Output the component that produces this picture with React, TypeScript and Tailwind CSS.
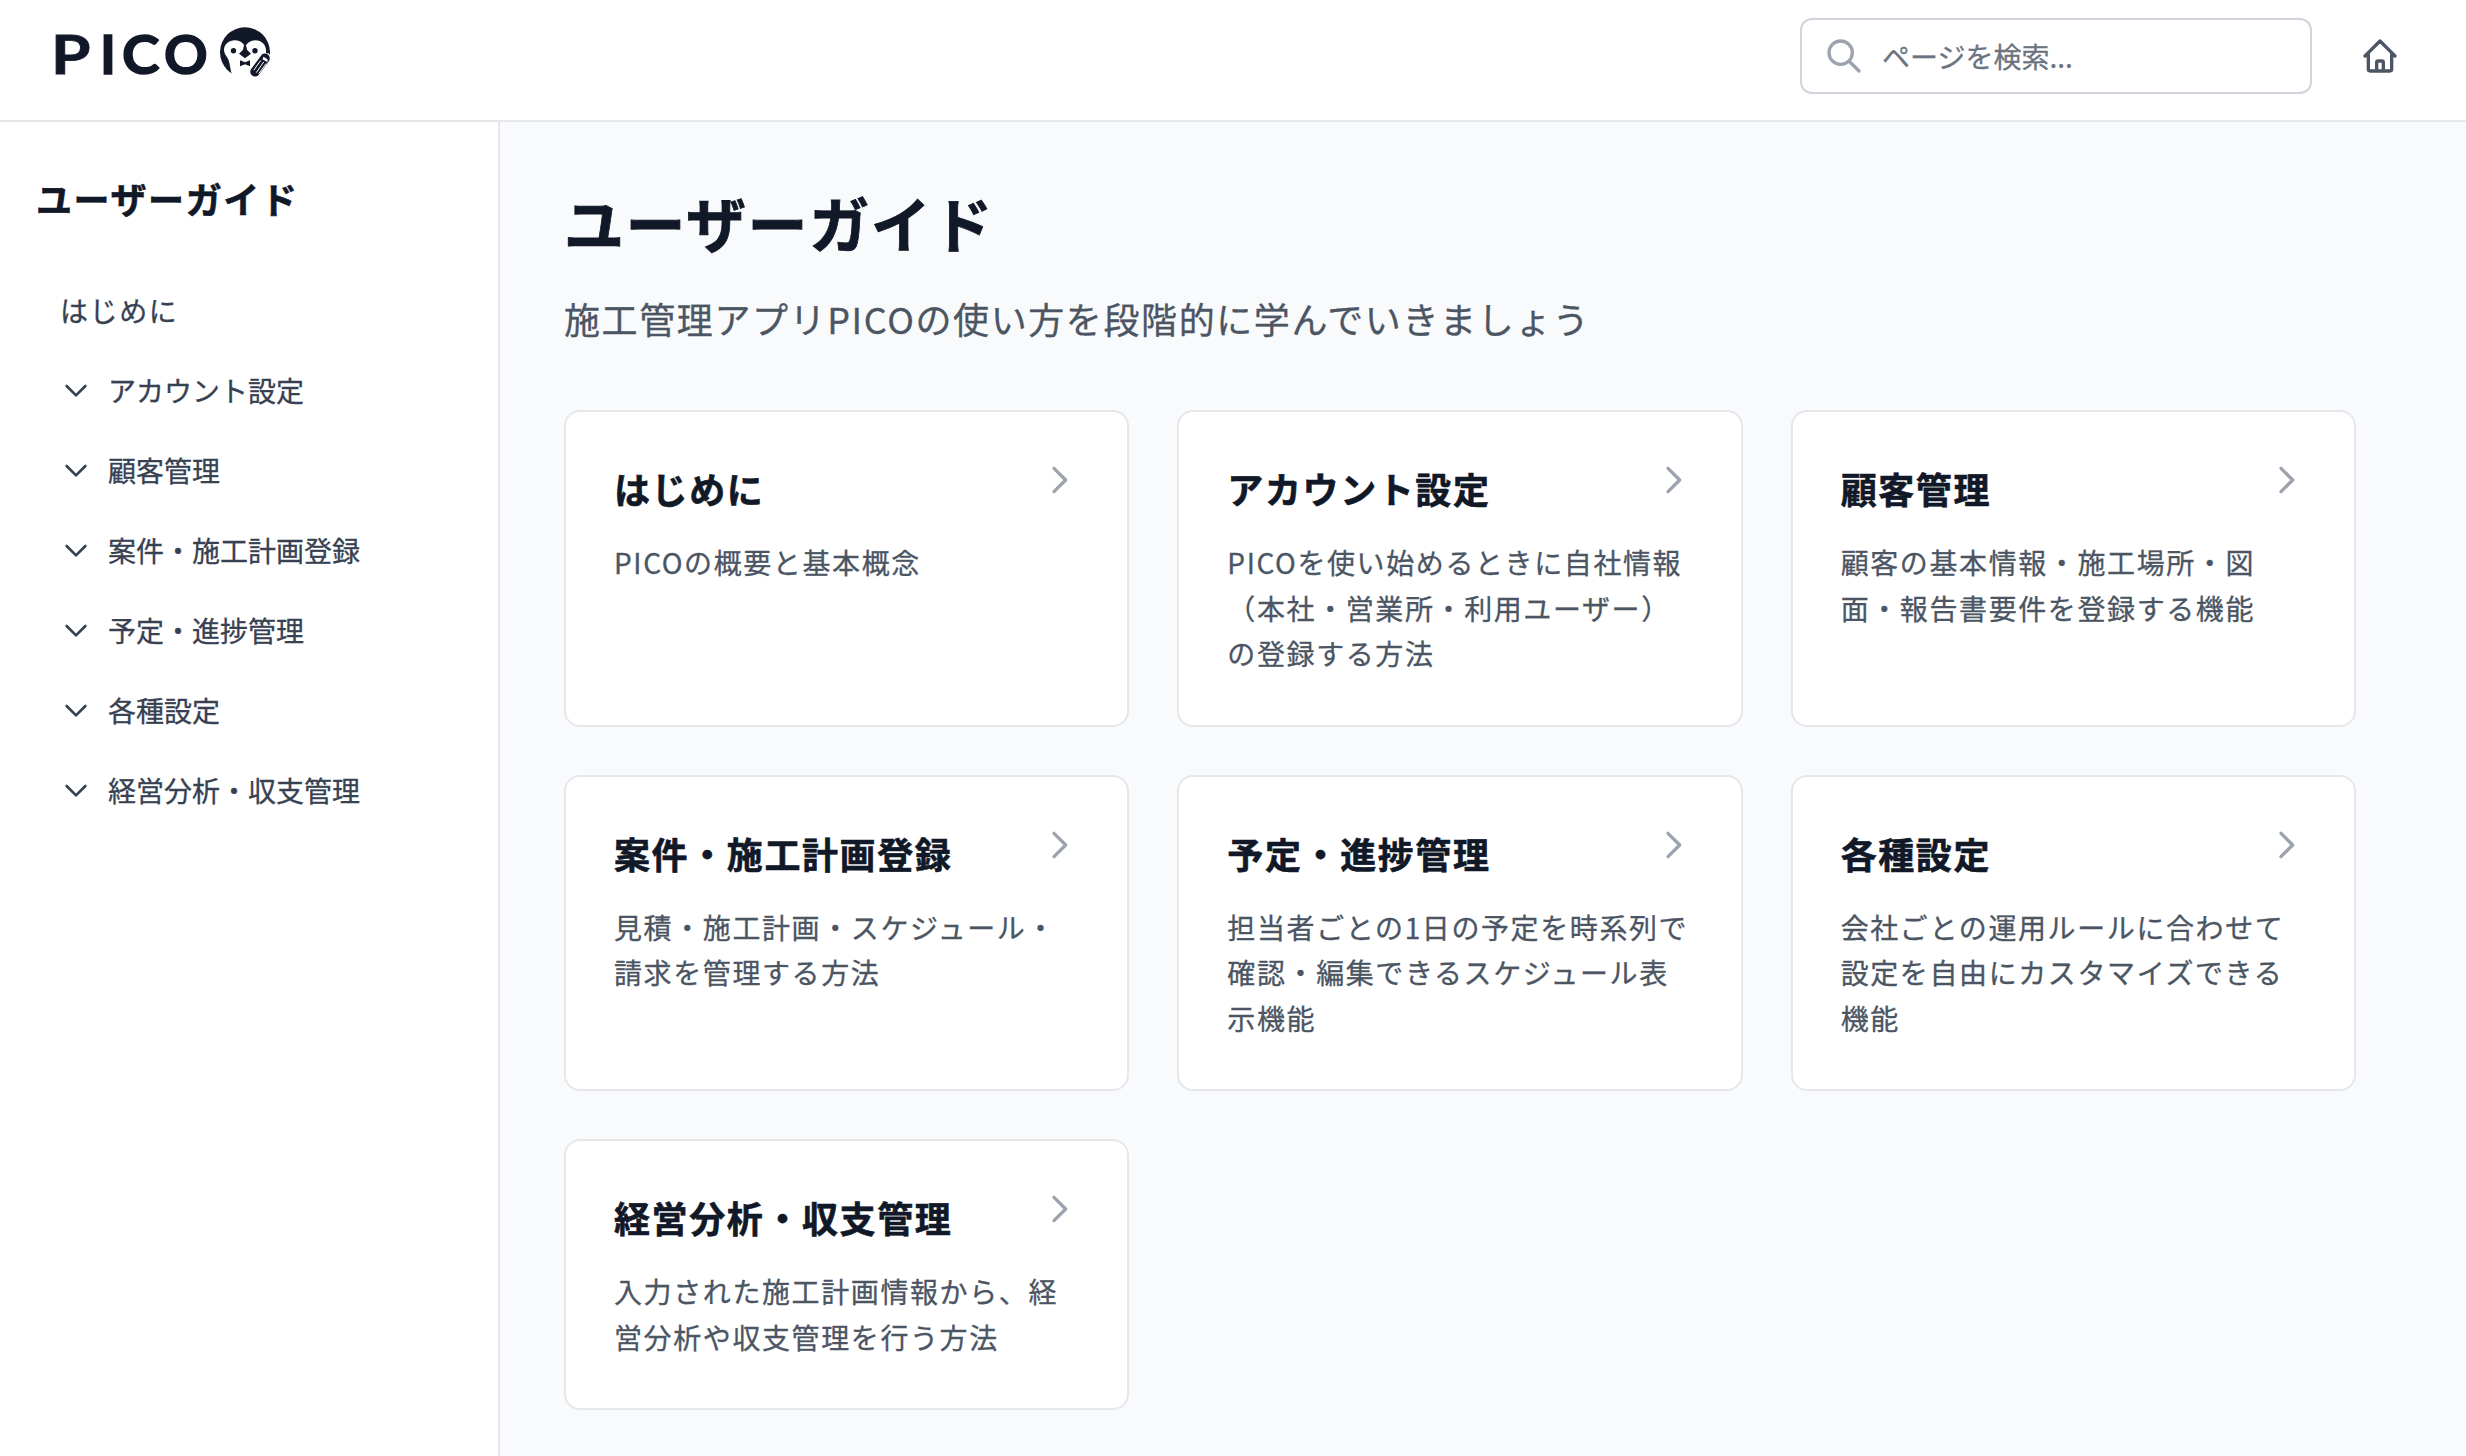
const navItems = [
  "アカウント設定",
  "顧客管理",
  "案件・施工計画登録",
  "予定・進捗管理",
  "各種設定",
  "経営分析・収支管理",
];

const cards = [
  { title: "はじめに", description: "PICOの概要と基本概念" },
  {
    title: "アカウント設定",
    description: "PICOを使い始めるときに自社情報（本社・営業所・利用ユーザー）の登録する方法",
  },
  {
    title: "顧客管理",
    description: "顧客の基本情報・施工場所・図面・報告書要件を登録する機能",
  },
  {
    title: "案件・施工計画登録",
    description: "見積・施工計画・スケジュール・請求を管理する方法",
  },
  {
    title: "予定・進捗管理",
    description: "担当者ごとの1日の予定を時系列で確認・編集できるスケジュール表示機能",
  },
  {
    title: "各種設定",
    description: "会社ごとの運用ルールに合わせて設定を自由にカスタマイズできる機能",
  },
  {
    title: "経営分析・収支管理",
    description: "入力された施工計画情報から、経営分析や収支管理を行う方法",
  },
];

function Logo() {
  return (
    <svg width="244" height="72" viewBox="-4 0 244 72" className="text-[#111827]" fill="currentColor">
      <g
        fontSize="54"
        stroke="currentColor"
        strokeWidth="0.8"
        className="font-['Lato',sans-serif] font-bold tracking-normal"
      >
        <text x="-1" y="55.500" textLength="39.500" lengthAdjust="spacingAndGlyphs">P</text>
        <text x="48" y="55.500" strokeWidth="1.500">I</text>
        <text x="70" y="55.500" textLength="37.500" lengthAdjust="spacingAndGlyphs" strokeWidth="1.500">C</text>
        <text x="112" y="55.500" strokeWidth="1.500">O</text>
      </g>
      {/* penguin */}
      <g transform="translate(168 9.300)">
        <circle cx="25" cy="25" r="25" />
        <path
          fill="#fff"
          d="M25 20C24 16 20 13 15 13 9 13 4 17 4 22.500c0 5 4.500 7.500 5.500 13.500 .8 5 1.500 9 3 13v3h27l12-22-3-4-2.500 0c1-8-4-13-10.500-13-5 0-9 3-10.500 7z"
        />
        <circle cx="13.500" cy="23.500" r="2.700" />
        <circle cx="35" cy="23.500" r="2.700" />
        <path d="M24 18h2l1 4.500 4 4-6 4.500-6-4.500 4-4z" />
        <path d="M20 33l5 2 5-2v6l-5-2-5 2z" />
        {/* pencil */}
        <g strokeLinecap="round" fill="none">
          <path d="M45 31L35 44.500" stroke="currentColor" strokeWidth="9.500" />
          <path d="M43.500 29.500l4 2.500v3l-5-3z" fill="#fff" />
          <path d="M40.500 33.500l-6.500 9M43.500 35l-7 10M46 36.500l-7 9.500" stroke="#fff" strokeWidth="1" />
        </g>
      </g>
    </svg>
  );
}

function ChevronDown() {
  return (
    <svg className="size-8 shrink-0" viewBox="0 0 24 24" fill="none" stroke="currentColor" strokeWidth="2" strokeLinecap="round" strokeLinejoin="round">
      <path d="M19 9l-7 7-7-7" />
    </svg>
  );
}

function GuideCard({ title, description }: { title: string; description: string }) {
  return (
    <a href="#" className="rounded-2xl border-2 border-[#e5e7eb] bg-white p-12">
      <div className="mb-6 flex items-start justify-between">
        <h3 className="text-4xl leading-14 font-bold [-webkit-text-stroke:0.6px]">{title}</h3>
        <svg className="size-10 shrink-0 text-[#9ca3af]" viewBox="0 0 24 24" fill="none" stroke="currentColor" strokeWidth="2" strokeLinecap="round" strokeLinejoin="round">
          <path d="M9 5l7 7-7 7" />
        </svg>
      </div>
      <p className="text-[28px] leading-[45.5px] text-[#4b5563]">{description}</p>
    </a>
  );
}

export default function App() {
  return (
    <div
      lang="ja"
      className="flex h-[1456px] flex-col overflow-hidden bg-[#f9fafb] font-['Noto_Sans_CJK_JP',sans-serif] tracking-[1.6px] text-[#111827] [-webkit-text-stroke:0.3px]"
    >
      <header className="flex h-[122px] shrink-0 items-start justify-between border-b-2 border-[#e5e7eb] bg-white pt-[18px] pr-[66px] pl-12">
        <Logo />
        <div className="flex items-center gap-12">
          <label className="flex h-[76px] w-[512px] items-center gap-[18px] rounded-xl border-2 border-[#d1d5db] pl-[22px]">
            <svg className="size-10 shrink-0 text-[#9ca3af]" viewBox="0 0 24 24" fill="none" stroke="currentColor" strokeWidth="2" strokeLinecap="round" strokeLinejoin="round">
              <path d="M21 21l-6-6m2-5a7 7 0 11-14 0 7 7 0 0114 0z" />
            </svg>
            <input
              type="text"
              placeholder="ページを検索..."
              className="w-full text-[28px] leading-10 tracking-normal outline-none placeholder:text-[#6b7280]"
            />
          </label>
          <svg className="size-10 text-[#4b5563]" viewBox="0 0 24 24" fill="none" stroke="currentColor" strokeWidth="2" strokeLinecap="round" strokeLinejoin="round">
            <path d="M3 12l2-2m0 0l7-7 7 7M5 10v10a1 1 0 001 1h3m10-11l2 2m-2-2v10a1 1 0 01-1 1h-3m-6 0a1 1 0 001-1v-4a1 1 0 011-1h2a1 1 0 011 1v4a1 1 0 001 1m-6 0h6" />
          </svg>
        </div>
      </header>

      <div className="flex min-h-0 flex-1">
        <aside className="w-[500px] shrink-0 border-r-2 border-[#e5e7eb] bg-white px-9 pt-12">
          <h2 className="mb-12 text-4xl leading-14 font-bold [-webkit-text-stroke:0.6px]">ユーザーガイド</h2>
          <nav className="flex flex-col gap-2 text-[28px] leading-10 text-[#374151]">
            <a href="#" className="px-6 py-4">
              はじめに
            </a>
            {navItems.map((item) => (
              <button key={item} className="flex items-center gap-4 px-6 py-4 tracking-normal">
                <ChevronDown />
                <span>{item}</span>
              </button>
            ))}
          </nav>
        </aside>

        <main className="flex-1 px-16 pt-16">
          <h1 className="mb-8 text-6xl leading-[72px] font-bold [-webkit-text-stroke:0.8px]">ユーザーガイド</h1>
          <p className="mb-16 text-4xl leading-14 text-[#4b5563]">
            施工管理アプリPICOの使い方を段階的に学んでいきましょう
          </p>
          <div className="grid w-[1792px] grid-cols-3 gap-12">
            {cards.map((card) => (
              <GuideCard key={card.title} {...card} />
            ))}
          </div>
        </main>
      </div>
    </div>
  );
}
